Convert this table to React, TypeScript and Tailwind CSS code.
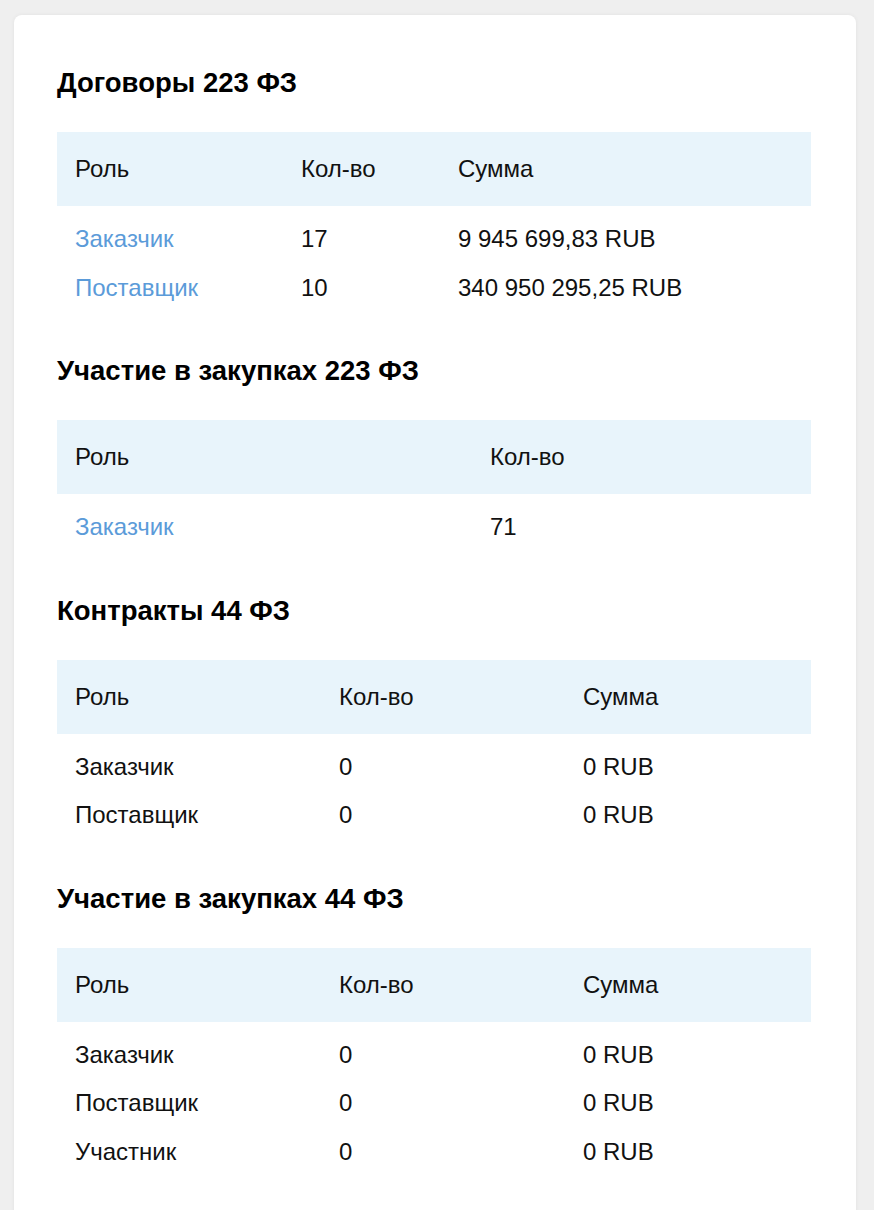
const link = "text-[#5b9bd9]";

type Row = { role: string; cells: string[]; link?: boolean };

function Section({
  title,
  cols,
  head,
  rows,
}: {
  title: string;
  cols: string;
  head: string[];
  rows: Row[];
}) {
  return (
    <section className="mb-[44px]">
      <h2 className="text-[27.5px] leading-[30px] font-bold text-black">{title}</h2>
      <div className="mt-[34px]">
        <div className={`grid ${cols} bg-[#e8f4fb] h-[74px] items-center`}>
          {head.map((h) => (
            <div key={h} className="pl-[18px]">
              {h}
            </div>
          ))}
        </div>
        <div className="pt-[9px]">
          {rows.map((r) => (
            <div key={r.role} className={`grid ${cols} h-[48.5px] items-center`}>
              <div className={`pl-[18px] ${r.link ? link : ""}`}>{r.role}</div>
              {r.cells.map((c, i) => (
                <div key={i} className="pl-[18px]">
                  {c}
                </div>
              ))}
            </div>
          ))}
        </div>
      </div>
    </section>
  );
}

export default function App() {
  return (
    <div
      className="min-h-screen bg-[#efefef] pt-[15px] pl-[14px] pr-[18px]"
      style={{ fontFamily: '"Liberation Sans", Arial, sans-serif' }}
    >
      <div className="bg-white rounded-lg shadow-[0_0_4px_rgba(0,0,0,0.06)] pl-[43px] pr-[45px] pt-[53px] pb-10 text-[24px] text-[#111]">
        <Section
          title="Договоры 223 ФЗ"
          cols="grid-cols-[226px_157px_1fr]"
          head={["Роль", "Кол-во", "Сумма"]}
          rows={[
            { role: "Заказчик", cells: ["17", "9 945 699,83 RUB"], link: true },
            { role: "Поставщик", cells: ["10", "340 950 295,25 RUB"], link: true },
          ]}
        />
        <Section
          title="Участие в закупках 223 ФЗ"
          cols="grid-cols-[415px_1fr]"
          head={["Роль", "Кол-во"]}
          rows={[{ role: "Заказчик", cells: ["71"], link: true }]}
        />
        <Section
          title="Контракты 44 ФЗ"
          cols="grid-cols-[264px_244px_1fr]"
          head={["Роль", "Кол-во", "Сумма"]}
          rows={[
            { role: "Заказчик", cells: ["0", "0 RUB"] },
            { role: "Поставщик", cells: ["0", "0 RUB"] },
          ]}
        />
        <Section
          title="Участие в закупках 44 ФЗ"
          cols="grid-cols-[264px_244px_1fr]"
          head={["Роль", "Кол-во", "Сумма"]}
          rows={[
            { role: "Заказчик", cells: ["0", "0 RUB"] },
            { role: "Поставщик", cells: ["0", "0 RUB"] },
            { role: "Участник", cells: ["0", "0 RUB"] },
          ]}
        />
      </div>
    </div>
  );
}
